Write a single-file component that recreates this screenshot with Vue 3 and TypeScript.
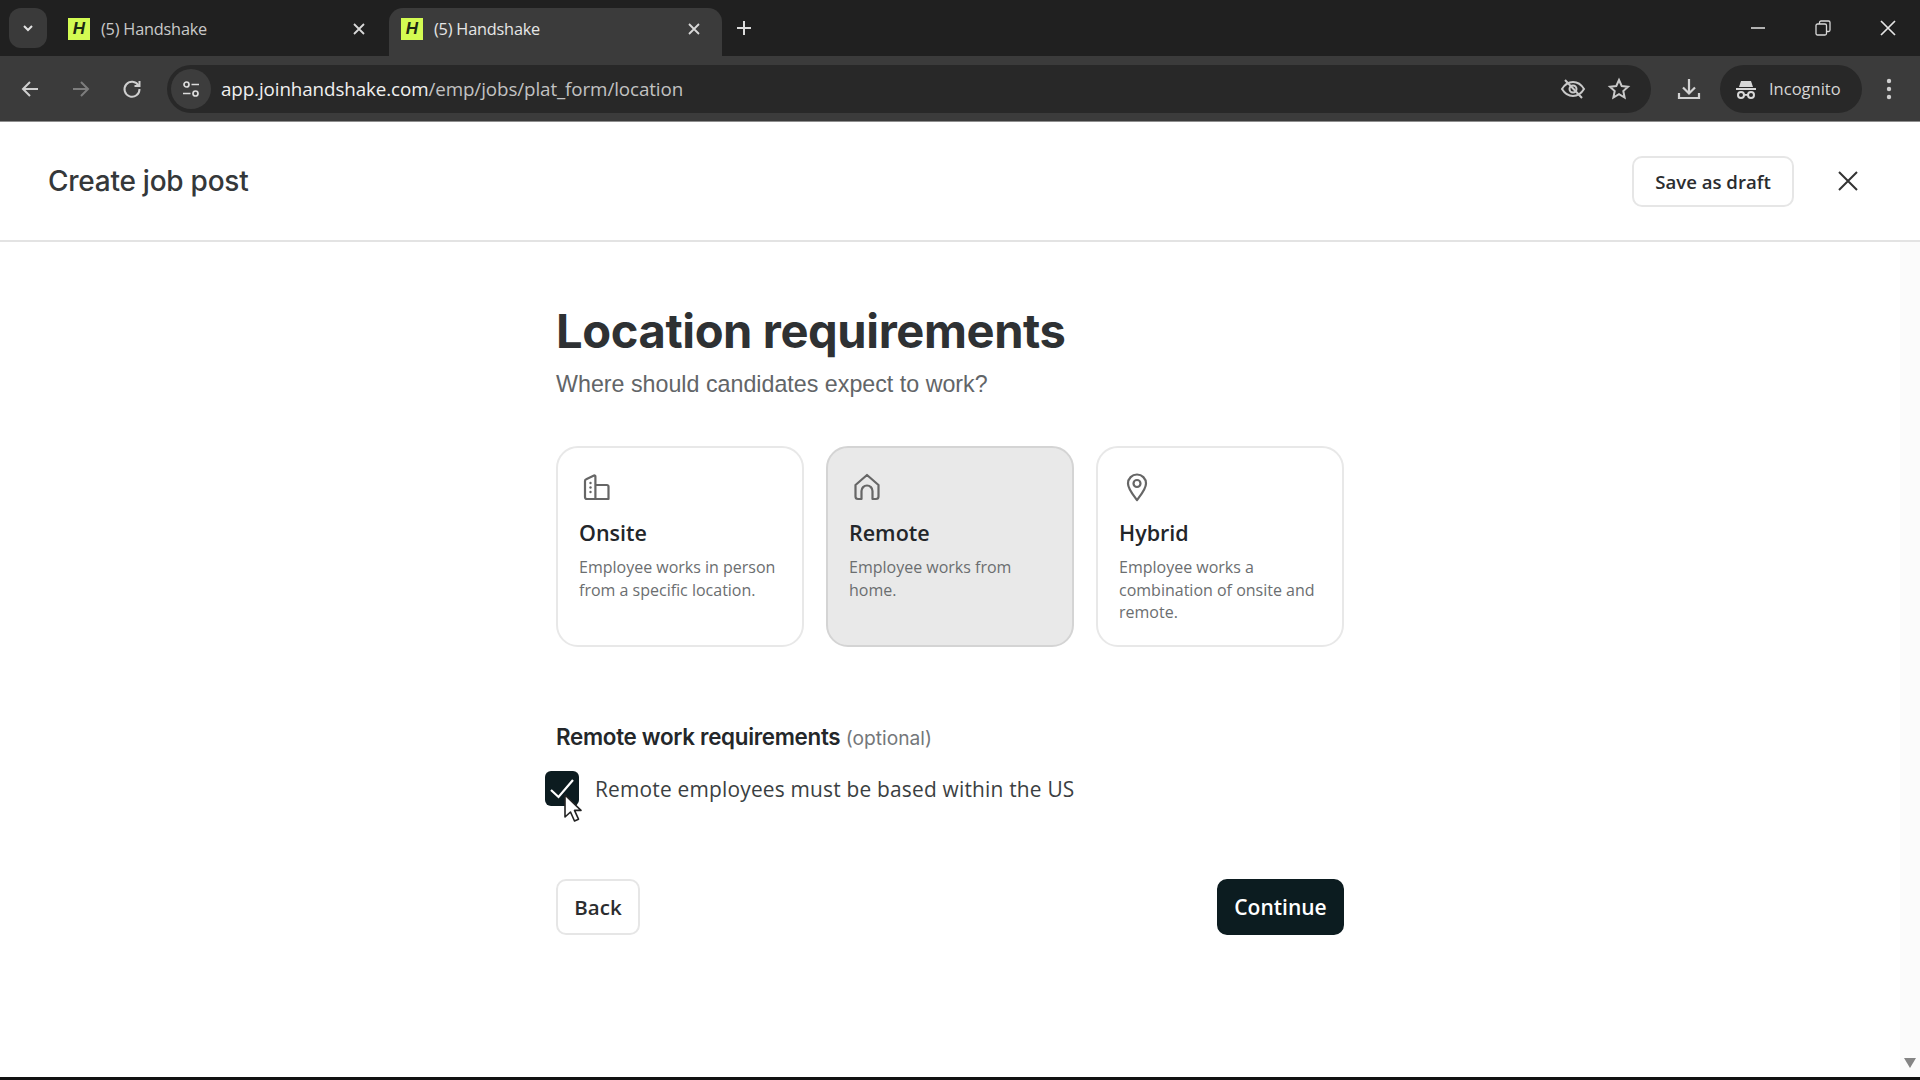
<script setup lang="ts">
interface BrowserTab {
  id: number
  title: string
  active: boolean
}

interface LocationOption {
  id: string
  title: string
  text: string
  selected: boolean
}

const tabs: BrowserTab[] = [
  { id: 1, title: '(5) Handshake', active: false },
  { id: 2, title: '(5) Handshake', active: true },
]

const options: LocationOption[] = [
  { id: 'onsite', title: 'Onsite', text: 'Employee works in person from a specific location.', selected: false },
  { id: 'remote', title: 'Remote', text: 'Employee works from home.', selected: true },
  { id: 'hybrid', title: 'Hybrid', text: 'Employee works a combination of onsite and remote.', selected: false },
]
</script>

<template>
  <div class="window">
    <!-- tab strip -->
    <div class="tabstrip">
      <button class="tab-search">
        <svg width="14" height="14" viewBox="0 0 14 14"><path d="M3 5l4 4 4-4" fill="none" stroke="#e3e3e3" stroke-width="2" /></svg>
      </button>
      <div v-for="tab in tabs" :key="tab.id" class="tab" :class="{ active: tab.active }">
        <span class="favicon">H</span>
        <span class="tab-title">{{ tab.title }}</span>
        <svg class="tab-close" width="14" height="14" viewBox="0 0 14 14"><path d="M2 2l10 10M12 2L2 12" stroke="#d8d8d8" stroke-width="1.8" /></svg>
      </div>
      <svg class="new-tab" width="16" height="16" viewBox="0 0 16 16"><path d="M8 1v14M1 8h14" stroke="#dcdcdc" stroke-width="2" /></svg>
      <div class="window-controls">
        <svg width="16" height="16" viewBox="0 0 16 16"><path d="M1 8h14" stroke="#d8d8d8" stroke-width="1.6" /></svg>
        <svg width="16" height="16" viewBox="0 0 16 16" fill="none" stroke="#d8d8d8" stroke-width="1.3"><rect x="1" y="4" width="10.5" height="11" rx="1.5" /><path d="M4.5 4V2.5A1.5 1.5 0 0 1 6 1h7.5A1.5 1.5 0 0 1 15 2.500V10a1.500 1.500 0 0 1-1.500 1.500h-2" /></svg>
        <svg width="16" height="16" viewBox="0 0 16 16"><path d="M1 1l14 14M15 1L1 15" stroke="#e4e4e4" stroke-width="1.7" /></svg>
      </div>
    </div>

    <!-- toolbar -->
    <div class="toolbar">
      <svg class="nav-icon" width="20" height="20" viewBox="0 0 20 20" fill="none" stroke="#cfcfcf" stroke-width="2"><path d="M18 10H3M10 3l-7 7 7 7" /></svg>
      <svg class="nav-icon" width="20" height="20" viewBox="0 0 20 20" fill="none" stroke="#7d7d7d" stroke-width="2"><path d="M2 10h15M10 3l7 7-7 7" /></svg>
      <svg class="nav-icon" width="20" height="20" viewBox="0 0 20 20" fill="none" stroke="#cfcfcf" stroke-width="2"><path d="M16.500 6.500A7.500 7.500 0 1 0 17.500 10" /><path d="M17.500 2v5h-5" /></svg>
      <div class="omnibox">
        <span class="site-btn">
          <svg width="20" height="20" viewBox="0 0 20 20" fill="none" stroke="#dcdcdc" stroke-width="1.7"><circle cx="5.500" cy="5.500" r="2.500" /><path d="M10.500 5.500H18M2 14.500h7.500" /><circle cx="14.500" cy="14.500" r="2.500" /></svg>
        </span>
        <span class="url">app.joinhandshake.com<span class="url-path">/emp/jobs/plat_form/location</span></span>
        <svg class="omni-icon" width="26" height="22" viewBox="0 0 26 22" fill="none" stroke="#c9c9c9" stroke-width="2"><path d="M2 11c3-5 7-7 11-7s8 2 11 7c-3 5-7 7-11 7s-8-2-11-7z" /><circle cx="13" cy="11" r="3.500" /><path d="M5 2l17 18" /></svg>
        <svg class="omni-icon star" width="24" height="24" viewBox="0 0 24 24" fill="none" stroke="#c9c9c9" stroke-width="2"><path d="M12 3l2.700 6 6.300.7-4.700 4.300 1.300 6.500-5.600-3.300-5.600 3.300 1.300-6.500L3 9.700 9.300 9z" /></svg>
      </div>
      <svg class="download" width="24" height="24" viewBox="0 0 24 24" fill="none" stroke="#d2d2d2" stroke-width="2.200"><path d="M12 2v14M6 10.500l6 6 6-6M2 16v5h20v-5" /></svg>
      <div class="incognito">
        <svg width="22" height="22" viewBox="0 0 22 22" fill="#d8d8d8"><path d="M6 3h10l2 6H4z" /><rect x="1" y="10" width="20" height="2" /><circle cx="6" cy="17" r="3" fill="none" stroke="#d8d8d8" stroke-width="2" /><circle cx="16" cy="17" r="3" fill="none" stroke="#d8d8d8" stroke-width="2" /><rect x="9" y="16" width="4" height="1.800" /></svg>
        <span>Incognito</span>
      </div>
      <svg class="menu-dots" width="6" height="22" viewBox="0 0 6 22" fill="#cfcfcf"><circle cx="3" cy="3" r="2.200" /><circle cx="3" cy="11" r="2.200" /><circle cx="3" cy="19" r="2.200" /></svg>
    </div>

    <!-- page -->
    <div class="page">
      <header class="page-header">
        <h2 class="page-title">Create job post</h2>
        <button class="btn header-btn">Save as draft</button>
        <svg class="header-close" width="20" height="20" viewBox="0 0 20 20"><path d="M1 1l18 18M19 1L1 19" stroke="#333" stroke-width="2" /></svg>
      </header>

      <main class="content">
        <h1 class="heading">Location requirements</h1>
        <p class="subheading">Where should candidates expect to work?</p>

        <div class="cards">
          <div v-for="opt in options" :key="opt.id" class="card" :class="{ selected: opt.selected }">
            <svg class="card-icon" width="30" height="30" viewBox="0 0 30 30" fill="none" stroke="#666" stroke-width="2.200" stroke-linejoin="round">
              <template v-if="opt.id === 'onsite'">
                <path d="M3 25V9a2 2 0 0 1 1.200-1.800L12 3.500a1 1 0 0 1 1.400 1V27H5a2 2 0 0 1-2-2z" />
                <path d="M13.400 13H25a1.500 1.500 0 0 1 1.500 1.500V27H13.400" />
                <circle cx="8.500" cy="11" r="1.200" fill="#666" stroke="none" />
                <circle cx="8.500" cy="15.500" r="1.200" fill="#666" stroke="none" />
                <circle cx="8.500" cy="20" r="1.200" fill="#666" stroke="none" />
              </template>
              <template v-else-if="opt.id === 'remote'">
                <path d="M6 27a2.500 2.500 0 0 1-2.500-2.500V13L15 3l11.500 10v11.500A2.500 2.500 0 0 1 24 27h-3.500V19a5.500 5.500 0 0 0-11 0v8z" />
              </template>
              <template v-else>
                <path d="M15 28C10.500 22 6 17 6 11.500a9 9 0 0 1 18 0C24 17 19.500 22 15 28z" />
                <circle cx="15" cy="11.500" r="3.500" />
              </template>
            </svg>
            <div class="card-title">{{ opt.title }}</div>
            <div class="card-text">{{ opt.text }}</div>
          </div>
        </div>

        <div class="req-title">Remote work requirements <span class="req-optional">(optional)</span></div>
        <label class="check-row">
          <span class="checkbox">
            <svg width="28" height="28" viewBox="0 0 28 28" fill="none" stroke="#fff" stroke-width="2.200"><path d="M3 15l7.500 7L25 5" /></svg>
            <svg class="cursor" width="20" height="30" viewBox="0 0 20 30"><path d="M2 2v22l5.500-5 4 9 4-1.800-4-8.800H18z" fill="#fff" stroke="#222" stroke-width="1.600" stroke-linejoin="round" /></svg>
          </span>
          <span class="check-label">Remote employees must be based within the US</span>
        </label>

        <div class="actions">
          <button class="btn back-btn">Back</button>
          <button class="btn continue-btn">Continue</button>
        </div>
      </main>

      <div class="scrollbar">
        <svg width="12" height="10" viewBox="0 0 12 10"><path d="M0 0h12L6 10z" fill="#858585" /></svg>
      </div>
    </div>
    <div class="bottom-bar"></div>
  </div>
</template>

<style scoped>
.window {
  width: 1920px;
  height: 1080px;
  display: flex;
  flex-direction: column;
  overflow: hidden;
  background: #fff;
  font-family: "Open Sans", "Liberation Sans", sans-serif;
}

/* tab strip */
.tabstrip {
  height: 56px;
  flex: none;
  display: flex;
  align-items: flex-end;
  background: #202020;
  padding-left: 9px;
}
.tab-search {
  width: 38px;
  height: 40px;
  margin-bottom: 8px;
  border: 0;
  border-radius: 12px;
  background: #3a3a3a;
  display: flex;
  align-items: center;
  justify-content: center;
  padding: 0;
}
.tab {
  width: 342px;
  height: 48px;
  display: flex;
  align-items: center;
  padding: 0 23px 7px 21px;
  box-sizing: border-box;
  color: #c9c9c9;
  font-size: 16.300px;
}
.tab.active {
  width: 333px;
  padding: 0 21px 7px 12px;
  background: #3b3b3b;
  border-radius: 14px 14px 0 0;
  color: #e6e6e6;
}
.favicon {
  width: 22px;
  height: 22px;
  flex: none;
  background: #d3fb52;
  color: #1c2a14;
  font: italic 700 17px/22px "Liberation Sans", sans-serif;
  text-align: center;
}
.tab-title {
  margin-left: 11px;
  flex: 1;
  letter-spacing: -0.2px;
}
.tab-close {
  flex: none;
}
.new-tab {
  margin: 0 0 20px 14px;
}
.window-controls {
  margin-left: auto;
  display: flex;
  gap: 49px;
  padding-right: 24px;
  margin-bottom: 20px;
}

/* toolbar */
.toolbar {
  height: 66px;
  flex: none;
  display: flex;
  align-items: center;
  background: #3b3b3b;
  padding: 0 0 0 20px;
  box-sizing: border-box;
  border-bottom: 1px solid #8e8e8e;
}
.nav-icon {
  flex: none;
  margin-right: 31px;
}
.nav-icon:nth-of-type(3) {
  margin-right: 25px;
}
.omnibox {
  width: 1484px;
  height: 48px;
  flex: none;
  display: flex;
  align-items: center;
  border-radius: 24px;
  background: #282828;
  padding-left: 4px;
  box-sizing: border-box;
}
.site-btn {
  width: 40px;
  height: 40px;
  border-radius: 50%;
  background: #3d3d3d;
  display: flex;
  align-items: center;
  justify-content: center;
  flex: none;
}
.url {
  margin-left: 10px;
  flex: 1;
  color: #f0f0f0;
  font-size: 18.800px;
  letter-spacing: -0.1px;
}
.url-path {
  color: #c2c2c2;
}
.omni-icon {
  flex: none;
  margin-right: 21px;
}
.star {
  margin-right: 20px;
}
.download {
  flex: none;
  margin-left: 26px;
}
.incognito {
  width: 142px;
  height: 48px;
  flex: none;
  margin-left: 19px;
  display: flex;
  align-items: center;
  gap: 12px;
  padding-left: 15px;
  box-sizing: border-box;
  border-radius: 24px;
  background: #282828;
  color: #d6d6d6;
  font-size: 16.500px;
}
.menu-dots {
  flex: none;
  margin-left: 24px;
}

/* page */
.page {
  flex: 1;
  min-height: 0;
  display: flex;
  flex-direction: column;
  position: relative;
  color: #1f2326;
}
.page-header {
  height: 120px;
  flex: none;
  display: flex;
  align-items: center;
  padding: 0 62px 0 48px;
  box-sizing: border-box;
  border-bottom: 2px solid #e3e3e3;
}
.page-title {
  margin: 0 auto 0 0;
  font-family: Inter, "Liberation Sans", sans-serif;
  font-size: 28px;
  font-weight: 500;
  letter-spacing: -0.25px;
  color: #35383a;
}
.btn {
  font-family: inherit;
  font-weight: 600;
  box-sizing: border-box;
  border-radius: 10px;
  border: 2px solid #e6e6e6;
  background: #fff;
  color: #2b2d2f;
  padding: 0;
}
.header-btn {
  width: 162px;
  height: 51px;
  font-size: 18.600px;
}
.header-close {
  margin-left: 44px;
}
.content {
  width: 788px;
  margin-left: 556px;
  display: flex;
  flex-direction: column;
}
.heading {
  margin: 0;
  padding-top: 60px;
  font-family: Inter, "Liberation Sans", sans-serif;
  font-size: 47.100px;
  line-height: 58px;
  font-weight: 700;
  letter-spacing: -0.4px;
  color: #2e3133;
}
.subheading {
  margin: 8px 0 0;
  font-family: "Liberation Sans", sans-serif;
  font-size: 23.250px;
  line-height: 32px;
  color: #626568;
}
.cards {
  display: flex;
  gap: 22.500px;
  margin-top: 46px;
}
.card {
  width: 247.500px;
  height: 201px;
  flex: none;
  box-sizing: border-box;
  border: 2px solid #e8e8e8;
  border-radius: 22px;
  padding: 24px 20px 0 21px;
  background: #fff;
}
.card.selected {
  background: #e9e9e9;
  border-color: #d4d4d4;
}
.card-icon {
  display: block;
  margin-left: 3px;
}
.card-title {
  margin-top: 16px;
  font-size: 21.500px;
  line-height: 30px;
  font-weight: 600;
  color: #23262a;
}
.card-text {
  margin-top: 8px;
  font-size: 16px;
  line-height: 22.600px;
  color: #6b6e70;
}
.req-title {
  margin-top: 75px;
  font-family: Inter, "Liberation Sans", sans-serif;
  font-size: 22.400px;
  line-height: 30px;
  font-weight: 600;
  letter-spacing: -0.3px;
  color: #24272a;
}
.req-optional {
  font-size: 19.200px;
  font-weight: 400;
  letter-spacing: 0;
  color: #74777a;
}
.check-row {
  display: flex;
  align-items: center;
  margin: 18px 0 0 -11px;
}
.checkbox {
  width: 34px;
  height: 35px;
  flex: none;
  position: relative;
  border-radius: 6px;
  background: #0c1c20;
  display: flex;
  align-items: center;
  justify-content: center;
}
.cursor {
  position: absolute;
  left: 18px;
  top: 22px;
}
.check-label {
  margin-left: 16px;
  font-size: 20.900px;
  letter-spacing: 0.2px;
  color: #3b3f42;
}
.actions {
  display: flex;
  justify-content: space-between;
  margin-top: 73px;
}
.back-btn {
  width: 84px;
  height: 56px;
  font-size: 20.500px;
}
.continue-btn {
  width: 127px;
  height: 56px;
  font-size: 21px;
  background: #0c1c20;
  border-color: #0c1c20;
  color: #fff;
}
.scrollbar {
  position: absolute;
  top: 120px;
  right: 0;
  bottom: 0;
  width: 20px;
  background: #fbfbfb;
  display: flex;
  align-items: flex-end;
  justify-content: center;
  padding-bottom: 9px;
  box-sizing: border-box;
}
.bottom-bar {
  height: 3px;
  flex: none;
  background: #111;
}
</style>
